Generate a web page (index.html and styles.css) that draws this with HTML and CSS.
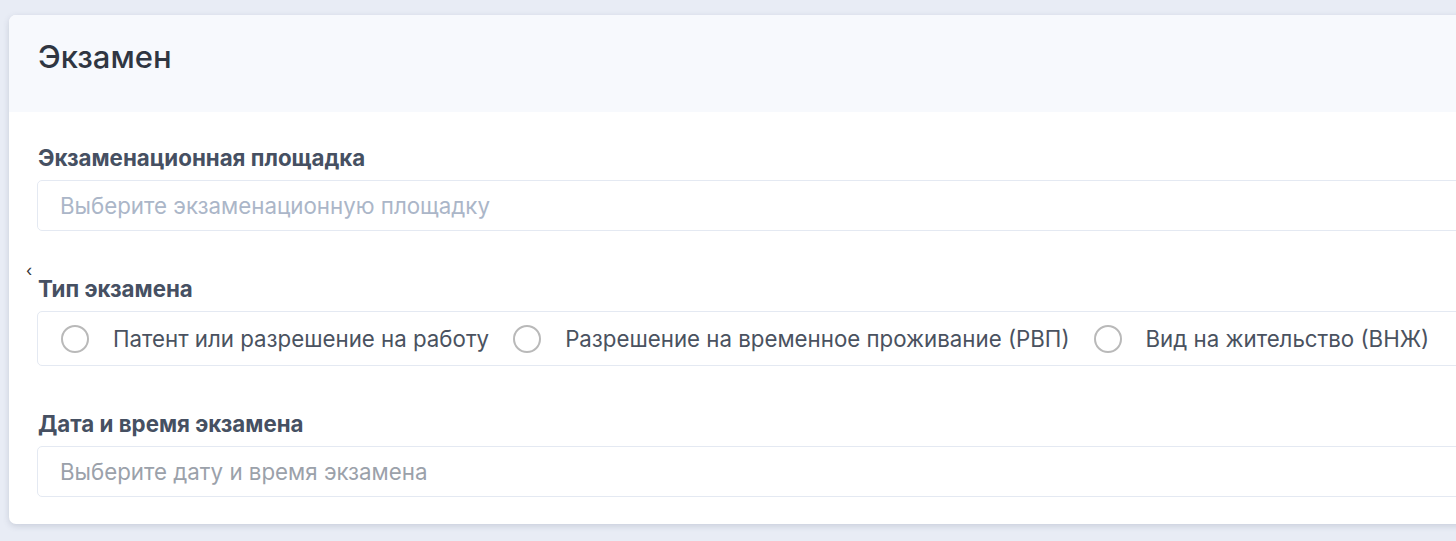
FILE: index.html
```html
<!DOCTYPE html>
<html lang="ru">
<head>
<meta charset="utf-8">
<title>Экзамен</title>
<link rel="stylesheet" href="styles.css">
</head>
<body>
<div class="card">
  <div class="card-header">
    <h2 class="card-title">Экзамен</h2>
  </div>
  <div class="card-body">
    <div class="field">
      <label class="field-label">Экзаменационная площадка</label>
      <div class="input"><span class="placeholder">Выберите экзаменационную площадку</span></div>
    </div>
    <div class="field">
      <span class="stray">‹</span>
      <label class="field-label">Тип экзамена</label>
      <div class="radio-group">
        <label class="radio"><span class="radio-circle"></span><span class="radio-text">Патент или разрешение на работу</span></label>
        <label class="radio"><span class="radio-circle"></span><span class="radio-text">Разрешение на временное проживание (РВП)</span></label>
        <label class="radio"><span class="radio-circle"></span><span class="radio-text">Вид на жительство (ВНЖ)</span></label>
      </div>
    </div>
    <div class="field">
      <label class="field-label">Дата и время экзамена</label>
      <div class="input"><span class="placeholder dim">Выберите дату и время экзамена</span></div>
    </div>
  </div>
</div>
</body>
</html>
```

FILE: styles.css
```css
html, body {
  margin: 0;
  padding: 0;
  overflow: hidden;
}
body {
  background: #e8ecf5;
  font-family: Inter, "Noto Sans", "Liberation Sans", sans-serif;
  padding: 15px 0 0 9px;
  height: 541px;
  box-sizing: border-box;
}
.card {
  width: 1500px;
  background: #ffffff;
  border-radius: 7px;
  box-shadow: 0 2px 6px rgba(60, 70, 100, 0.18);
  overflow: hidden;
}
.card-header {
  background: #f7f9fd;
  height: 97px;
  padding-left: 29px;
  display: flex;
  align-items: center;
  box-sizing: border-box;
}
.card-title {
  margin: 0;
  font-size: 31px;
  font-weight: 500;
  color: #2f3642;
  line-height: 36px;
  position: relative;
  top: -7px;
}
.card-body {
  padding: 35px 0 27px 28px;
  display: flex;
  flex-direction: column;
  gap: 47px;
}
.field {
  position: relative;
  display: flex;
  flex-direction: column;
  gap: 11px;
}
.field-label {
  font-size: 22.3px;
  font-weight: 700;
  line-height: 22px;
  color: #465062;
  padding-left: 1px;
}
.input {
  height: 51px;
  box-sizing: border-box;
  border: 1px solid #e4e9f2;
  border-radius: 5px;
  display: flex;
  align-items: center;
  padding-left: 22px;
}
.placeholder {
  font-size: 22.3px;
  color: #abb6c8;
}
.placeholder.dim {
  color: #9ba1aa;
}
.stray {
  position: absolute;
  left: -11px;
  top: -16px;
  font-size: 16px;
  line-height: 16px;
  color: #333;
}
.radio-group {
  height: 55px;
  box-sizing: border-box;
  border: 1px solid #e4e9f2;
  border-radius: 5px;
  display: flex;
  align-items: center;
  padding-left: 23px;
  gap: 24px;
}
.radio {
  display: flex;
  align-items: center;
  gap: 24px;
}
.radio-circle {
  width: 28px;
  height: 28px;
  box-sizing: border-box;
  border: 2px solid #b9b9b9;
  border-radius: 50%;
  background: #fff;
}
.radio-text {
  font-size: 22.27px;
  color: #4a5260;
  white-space: nowrap;
}
```
